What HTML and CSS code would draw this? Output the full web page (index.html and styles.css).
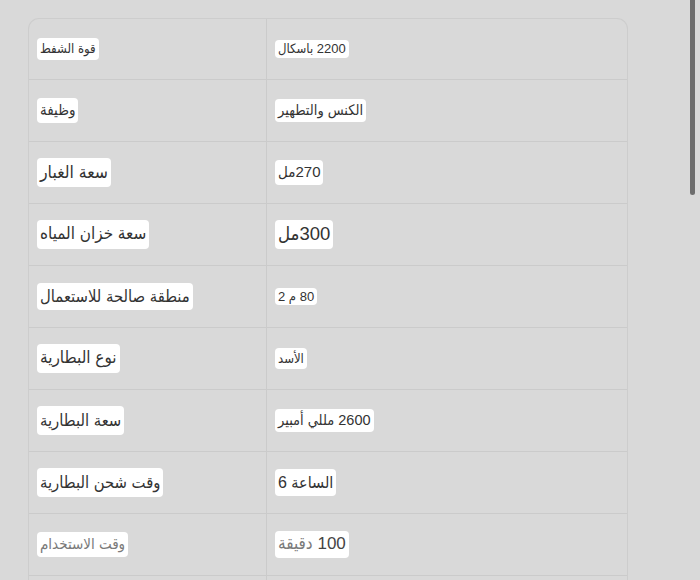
FILE: index.html
```html
<!DOCTYPE html>
<html lang="ar">
<head>
<meta charset="utf-8">
<title>المواصفات</title>
<link rel="stylesheet" href="styles.css">
</head>
<body>
<div class="spec">
  <div class="row">
    <div class="cell key"><span class="tag fs-13" dir="rtl">قوة الشفط</span></div>
    <div class="cell val"><span class="tag fs-13 tight" dir="rtl">2200 باسكال</span></div>
  </div>
  <div class="row">
    <div class="cell key"><span class="tag fs-15" dir="rtl">وظيفة</span></div>
    <div class="cell val"><span class="tag fs-14-5" dir="rtl">الكنس والتطهير</span></div>
  </div>
  <div class="row">
    <div class="cell key"><span class="tag fs-17-5 tall" dir="rtl">سعة الغبار</span></div>
    <div class="cell val"><span class="tag fs-15" dir="rtl">270مل</span></div>
  </div>
  <div class="row">
    <div class="cell key"><span class="tag fs-17 tall" dir="rtl">سعة خزان المياه</span></div>
    <div class="cell val"><span class="tag fs-18-5" dir="rtl">300مل</span></div>
  </div>
  <div class="row">
    <div class="cell key"><span class="tag fs-16-5" dir="rtl">منطقة صالحة للاستعمال</span></div>
    <div class="cell val"><span class="tag fs-13 tight" dir="rtl">80 م 2</span></div>
  </div>
  <div class="row">
    <div class="cell key"><span class="tag fs-17 tall" dir="rtl">نوع البطارية</span></div>
    <div class="cell val"><span class="tag fs-13" dir="rtl">الأسد</span></div>
  </div>
  <div class="row">
    <div class="cell key"><span class="tag fs-16-5 tall" dir="rtl">سعة البطارية</span></div>
    <div class="cell val"><span class="tag fs-14-5" dir="rtl">2600 مللي أمبير</span></div>
  </div>
  <div class="row">
    <div class="cell key"><span class="tag fs-16-5 tall" dir="rtl">وقت شحن البطارية</span></div>
    <div class="cell val"><span class="tag fs-16 tall" dir="rtl">الساعة 6</span></div>
  </div>
  <div class="row">
    <div class="cell key"><span class="tag fs-15 muted" dir="rtl">وقت الاستخدام</span></div>
    <div class="cell val"><span class="tag fs-17" dir="rtl"><span class="num">100</span> <span class="muted">دقيقة</span></span></div>
  </div>
  <div class="row">
    <div class="cell key"></div>
    <div class="cell val"></div>
  </div>
</div>
<div class="scrollbar"></div>
</body>
</html>
```

FILE: styles.css
```css
html, body {
  margin: 0;
  padding: 0;
  height: 100%;
  overflow: hidden;
  background: #d9d9d9;
}

body {
  padding: 18px 0 0 28px;
  box-sizing: border-box;
  font-family: "Liberation Sans", "DejaVu Sans Condensed", "DejaVu Sans", Arial, sans-serif;
  color: #333333;
}

.spec {
  width: 600px;
  border: 1px solid #cdcdcd;
  border-bottom: none;
  border-radius: 11px 11px 0 0;
  box-sizing: border-box;
  overflow: hidden;
}

.row {
  display: grid;
  grid-template-columns: 238px 1fr;
  height: 62px;
  box-sizing: border-box;
  border-bottom: 1px solid #cbcbcb;
}

.row:first-child {
  height: 61px;
}

.cell {
  display: flex;
  align-items: center;
  padding: 0 0 0 8px;
}

.key {
  border-right: 1px solid #cbcbcb;
}

.val {
  padding-left: 8px;
}

.tag {
  display: inline-block;
  background: #ffffff;
  border-radius: 4px;
  padding: 2px 3px;
  line-height: 1.35;
  white-space: nowrap;
}

.tag.tight {
  padding: 0 3px;
}

.tag.tall {
  padding: 3px 3px;
}

.fs-13 { font-size: 13px; }
.fs-14-5 { font-size: 14.5px; }
.fs-15 { font-size: 15px; }
.fs-16 { font-size: 16px; }
.fs-16-5 { font-size: 16.5px; }
.fs-17 { font-size: 17px; }
.fs-17-5 { font-size: 17.5px; }
.fs-18-5 { font-size: 18.5px; }

.muted {
  color: #7a7a7a;
}

.num {
  color: #444444;
}

.scrollbar {
  position: fixed;
  top: 0;
  left: 690px;
  width: 5px;
  height: 195px;
  background: #6d6d6d;
  border-radius: 0 0 3px 3px;
}
```
